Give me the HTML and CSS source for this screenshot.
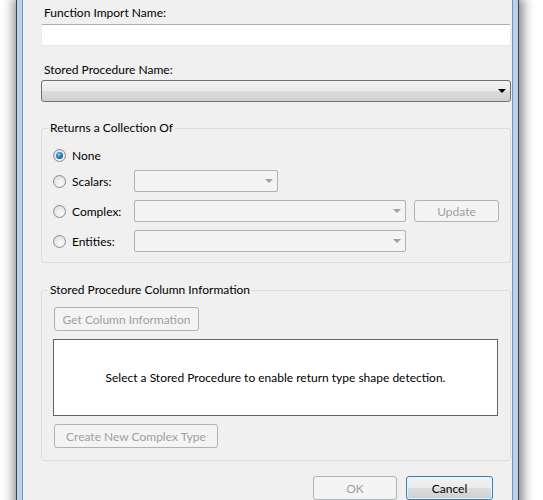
FILE: index.html
```html
<!DOCTYPE html>
<html>
<head>
<meta charset="utf-8">
<link rel="stylesheet" href="styles.css">
</head>
<body>
<div class="screen">
  <div class="window">
    <div class="client">
      <div class="field-label">Function Import Name:</div>
      <div class="textbox"></div>
      <div class="field-label second">Stored Procedure Name:</div>
      <div class="combo-main"><span class="arrow"></span></div>

      <fieldset class="group returns">
        <legend>Returns a Collection Of</legend>
        <div class="opt-row first">
          <span class="radio checked"></span><span class="opt-label">None</span>
        </div>
        <div class="opt-row">
          <span class="radio"></span><span class="opt-label">Scalars:</span>
          <div class="combo w-short"><span class="arrow"></span></div>
        </div>
        <div class="opt-row">
          <span class="radio"></span><span class="opt-label">Complex:</span>
          <div class="combo w-long"><span class="arrow"></span></div>
          <div class="btn disabled update">Update</div>
        </div>
        <div class="opt-row">
          <span class="radio"></span><span class="opt-label">Entities:</span>
          <div class="combo w-long"><span class="arrow"></span></div>
        </div>
      </fieldset>

      <fieldset class="group columns">
        <legend>Stored Procedure Column Information</legend>
        <div class="btn disabled get-col">Get Column Information</div>
        <div class="info-box">Select a Stored Procedure to enable return type shape detection.</div>
        <div class="btn disabled create">Create New Complex Type</div>
      </fieldset>

      <div class="footer">
        <div class="btn disabled ok">OK</div>
        <div class="btn default cancel">Cancel</div>
      </div>
    </div>
  </div>
</div>
</body>
</html>
```

FILE: styles.css
```css
html, body {
  margin: 0;
  padding: 0;
  background: #ffffff;
  overflow: hidden;
}

.screen {
  width: 543px;
  height: 500px;
  overflow: hidden;
  font-family: "Lato", "Noto Sans", sans-serif;
  font-size: 12px;
  color: #000;
}

.window {
  margin-left: 16px;
  width: 503px;
  height: 540px;
  box-sizing: border-box;
  border: 1px solid #3e4348;
  border-top: none;
  padding: 0 5px 5px 5px;
  background: #b9d1ea;
  box-shadow: 1px 0 11px 3px rgba(0, 0, 0, 0.5);
}

.client {
  height: 100%;
  box-sizing: border-box;
  border: 1px solid #7f93a8;
  border-top: none;
  background: #f0f0f0;
  padding: 5px 0 0 18px;
}

.field-label {
  height: 16px;
  line-height: 16px;
  white-space: nowrap;
  margin-left: 3px;
}

.field-label.second {
  margin-top: 16px;
}

.textbox {
  margin-top: 3px;
  width: 470px;
  height: 22px;
  box-sizing: border-box;
  background: #fff;
  border: 1px solid #e3e9ef;
  border-top-color: #abadb3;
  border-radius: 2px;
}

.combo-main {
  margin-top: 2px;
  width: 470px;
  height: 22px;
  box-sizing: border-box;
  border: 1px solid #707070;
  border-radius: 3px;
  background: linear-gradient(#f2f2f2 0%, #ebebeb 50%, #dddddd 50%, #cfcfcf 100%);
  display: flex;
  align-items: center;
  justify-content: flex-end;
  padding-right: 4px;
}

.arrow {
  width: 0;
  height: 0;
  border-left: 4px solid transparent;
  border-right: 4px solid transparent;
  border-top: 4px solid #000;
}

.group {
  margin: 0;
  width: 470px;
  box-sizing: border-box;
  border: 1px solid #d5dfe5;
  border-radius: 3px;
  min-width: 0;
}

.group legend {
  padding: 0 2px;
  line-height: 16px;
  height: 16px;
  white-space: nowrap;
}

.returns {
  margin-top: 18px;
  padding: 8px 0 10px 11px;
}

.returns legend {
  margin-left: -5px;
}

.opt-row {
  display: flex;
  align-items: center;
  height: 22px;
  margin-top: 8px;
}

.opt-row.first {
  margin-top: 0;
  margin-bottom: -4px;
}

.radio {
  width: 13px;
  height: 13px;
  box-sizing: border-box;
  border-radius: 50%;
  border: 1px solid #8a8c8e;
  background: radial-gradient(circle at 60% 65%, #fbfbfb 0%, #e8e8e8 55%, #cfcfcf 100%);
  flex: none;
  position: relative;
}

.radio.checked::after {
  content: "";
  position: absolute;
  left: 2px;
  top: 2px;
  width: 7px;
  height: 7px;
  border-radius: 50%;
  background: radial-gradient(circle at 40% 35%, #8fd0f5 0%, #2d86c2 40%, #0b3f6e 100%);
}

.opt-label {
  margin-left: 6px;
  width: 62px;
  flex: none;
}

.combo {
  height: 22px;
  box-sizing: border-box;
  border: 1px solid #adb2b5;
  border-radius: 2px;
  background: #f4f4f4;
  display: flex;
  align-items: center;
  justify-content: flex-end;
  padding-right: 4px;
  flex: none;
}

.combo .arrow {
  border-top-color: #a0a0a0;
}

.w-short { width: 144px; }
.w-long { width: 272px; }

.btn {
  box-sizing: border-box;
  height: 24px;
  border-radius: 3px;
  display: flex;
  align-items: center;
  justify-content: center;
  white-space: nowrap;
}

.btn.disabled {
  border: 1px solid #adb2b5;
  background: #f4f4f4;
  color: #a0a0a0;
}

.btn.default {
  border: 1px solid #3c7fb1;
  box-shadow: inset 0 0 0 1px #e4f3fc;
  background: linear-gradient(#f2f2f2 0%, #ebebeb 50%, #dddddd 50%, #cfcfcf 100%);
  color: #000;
}

.update {
  margin-left: 8px;
  width: 85px;
  height: 22px;
}

.columns {
  margin-top: 19px;
  padding: 9px 12px 12px 12px;
}

.columns legend {
  margin-left: -6px;
}

.get-col {
  width: 145px;
}

.info-box {
  margin-top: 8px;
  margin-left: -1px;
  height: 77px;
  box-sizing: border-box;
  border: 1px solid #646464;
  background: #fff;
  display: flex;
  align-items: center;
  justify-content: center;
}

.create {
  margin-top: 8px;
  width: 164px;
}

.footer {
  margin-top: 15px;
  width: 470px;
  display: flex;
  justify-content: flex-end;
  gap: 9px;
  box-sizing: border-box;
}

.ok {
  width: 84px;
}

.cancel {
  width: 87px;
  margin-right: 18px;
}
```
